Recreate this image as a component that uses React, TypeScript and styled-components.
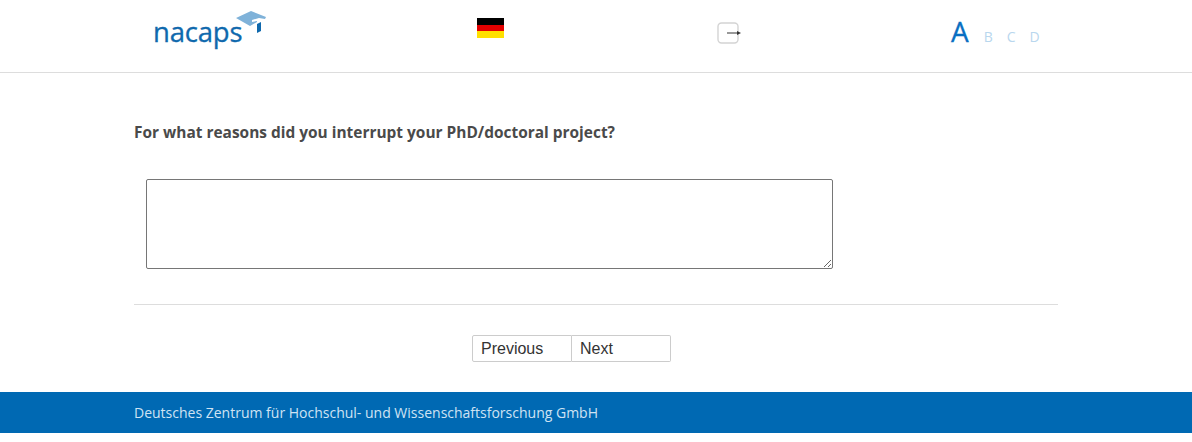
import React from "react";
import styled, { createGlobalStyle } from "styled-components";

const Global = createGlobalStyle`
  html, body { margin: 0; padding: 0; background: #fff; }
  body { font-family: "Open Sans", "Liberation Sans", sans-serif; color: #444; }
`;
const Header = styled.header`
  height: 72px;
  border-bottom: 1px solid #ddd;
  display: grid;
  grid-template-columns: 323px 240px 234px 1fr;
  padding-left: 154px;
  align-items: start;
`;
const Logo = styled.div`
  position: relative;
  width: 112px;
  height: 50px;
  margin-top: 10px;
`;
const LogoText = styled.span`
  position: absolute;
  left: -1px;
  top: 2px;
  font-family: "Open Sans", sans-serif;
  font-size: 27.5px;
  line-height: 40px;
  color: #0f69ad;
  letter-spacing: -0.2px;
  -webkit-text-stroke: 0.3px #0f69ad;
`;
const LogoMark = styled.svg`
  position: absolute;
  left: 81px;
  top: 0;
`;
const Flag = styled.div`
  width: 27px;
  height: 20px;
  margin-top: 18px;
  display: flex;
  flex-direction: column;
`;
const Stripe = styled.div<{ $c: string }>`
  flex: 1;
  background: ${(p) => p.$c};
`;
const LogoutIcon = styled.svg`
  margin-top: 22px;
  display: block;
`;
const Sizes = styled.div`
  display: flex;
  align-items: baseline;
  margin-top: 12px;
`;
const Size = styled.span<{ $active?: boolean }>`
  font-size: ${(p) => (p.$active ? "28px" : "14px")};
  line-height: 38px;
  color: ${(p) => (p.$active ? "#0a6fc2" : "#b9d7ee")};
  margin-right: ${(p) => (p.$active ? "15px" : "14px")};
  -webkit-text-stroke: ${(p) => (p.$active ? "0.3px #0a6fc2" : "0")};
`;
const Main = styled.main`
  width: 924px;
  margin-left: 134px;
`;
const Question = styled.h1`
  margin: 0;
  padding-top: 48px;
  font-size: 15.44px;
  line-height: 22px;
  font-weight: 700;
  color: #4a4a4a;
`;
const Answer = styled.div`
  padding: 36px 0 35px 12px;
  border-bottom: 1px solid #ddd;
`;
const Area = styled.textarea`
  display: block;
  width: 687px;
  height: 90px;
  box-sizing: border-box;
  border: 1px solid #767676;
  border-radius: 2px;
  background: #fff;
  padding: 2px;
  margin: 0;
`;
const Nav = styled.nav`
  display: flex;
  padding: 30px 0 30px 338px;
`;
const Btn = styled.button<{ $first?: boolean }>`
  width: ${(p) => (p.$first ? "100px" : "99px")};
  height: 27px;
  box-sizing: border-box;
  background: #fff;
  color: #333;
  border: 1px solid #ccc;
  border-left: ${(p) => (p.$first ? "1px solid #ccc" : "0")};
  border-radius: ${(p) => (p.$first ? "2px 0 0 2px" : "0 2px 2px 0")};
  font-family: "Liberation Sans", Arial, sans-serif;
  font-size: 16px;
  text-align: left;
  padding: 0 0 0 8px;
  margin: 0;
`;
const Footer = styled.footer`
  height: 41px;
  background: #0069b3;
  color: #cfe3f3;
  font-size: 14px;
  line-height: 41px;
  padding-left: 134px;
`;

export default function App() {
  return (
    <>
      <Global />
      <Header>
        <Logo>
          <LogoText>nacaps</LogoText>
          <LogoMark width="32" height="26" viewBox="0 0 32 26">
            <path d="M1 8 L16 1 L31 7 L30 9 L24 8 L17 10 L17 12 L22 11 L22 12 L15 16 Z" fill="#7fb2d9" />
            <path d="M22 14 L26 12 L26 21 L22 23 Z" fill="#0f69ad" />
          </LogoMark>
        </Logo>
        <Flag>
          <Stripe $c="#000" />
          <Stripe $c="#e30000" />
          <Stripe $c="#ffe000" />
        </Flag>
        <LogoutIcon width="24" height="22" viewBox="0 0 24 22">
          <rect x="1" y="1" width="20" height="20" rx="3.5" fill="#fff" stroke="#d4d4d4" strokeWidth="1.4" />
          <path d="M10 11 H20" stroke="#555" strokeWidth="1.2" />
          <path d="M20 9 L24 11 L20 13 Z" fill="#333" />
        </LogoutIcon>
        <Sizes>
          <Size $active>A</Size>
          <Size>B</Size>
          <Size>C</Size>
          <Size>D</Size>
        </Sizes>
      </Header>
      <Main>
        <Question>For what reasons did you interrupt your PhD/doctoral project?</Question>
        <Answer>
          <Area />
        </Answer>
        <Nav>
          <Btn $first>Previous</Btn>
          <Btn>Next</Btn>
        </Nav>
      </Main>
      <Footer>Deutsches Zentrum für Hochschul- und Wissenschaftsforschung GmbH</Footer>
    </>
  );
}
